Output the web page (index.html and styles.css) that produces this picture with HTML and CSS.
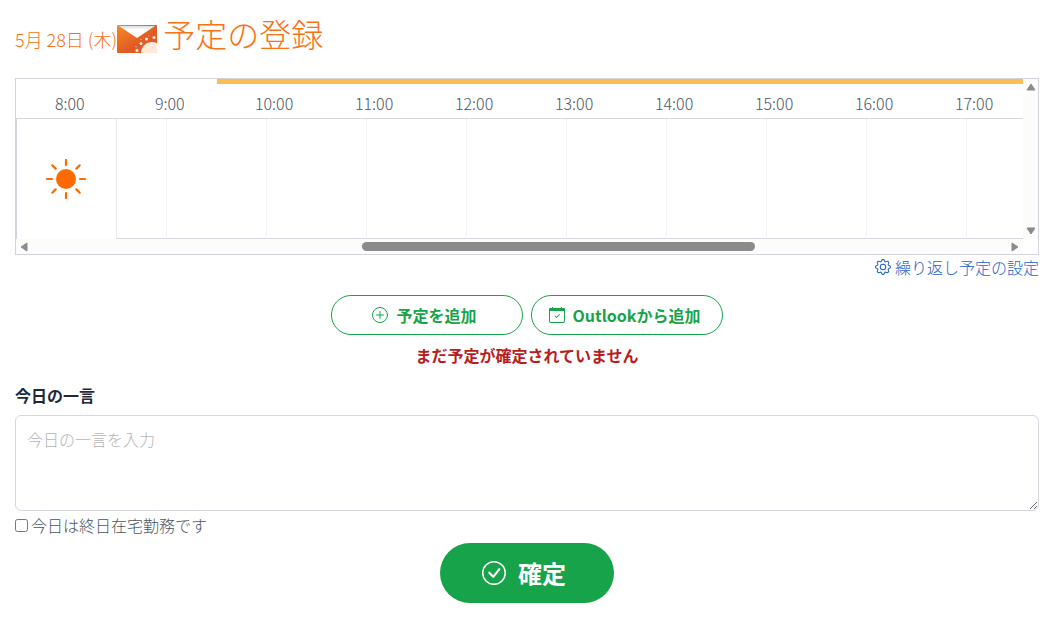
FILE: index.html
```
<!DOCTYPE html>
<html lang="ja">
<head>
    <meta charset="UTF-8">
    <meta name="viewport" content="width=device-width, initial-scale=1.0">
    <title>予定の登録</title>
    <link rel="stylesheet" href="styles.css">
</head>
<body>
    <header class="page-header">
        <span class="date">5月 28日 (木)</span>
        <svg class="mail-icon" viewBox="0 0 40 28" aria-hidden="true">
            <defs>
                <linearGradient id="mail" x1="0" y1="0" x2="1" y2="1">
                    <stop offset="0" stop-color="#f98a25"/>
                    <stop offset=".6" stop-color="#df5a24"/>
                </linearGradient>
                <linearGradient id="flap" x1="0" y1="0" x2="0" y2="1">
                    <stop offset="0" stop-color="#dcdcdc"/>
                    <stop offset=".3" stop-color="#fff"/>
                </linearGradient>
                <clipPath id="mail-clip"><rect width="40" height="28" rx="1"/></clipPath>
            </defs>
            <g clip-path="url(#mail-clip)">
                <rect width="40" height="28" fill="url(#mail)"/>
                <path d="M2 1h36L20 13z" fill="url(#flap)"/>
                <g fill="#ffe9d8">
                    <circle cx="35" cy="28" r="11"/>
                    <circle cx="20" cy="25.500" r="1.500"/>
                    <circle cx="19" cy="21.500" r=".6"/>
                    <circle cx="24" cy="18.500" r="1.500"/>
                    <circle cx="24" cy="14.500" r=".5"/>
                    <circle cx="29.500" cy="14" r="1.500"/>
                    <circle cx="32" cy="11" r=".5"/>
                    <circle cx="37" cy="12.500" r="1.500"/>
                </g>
            </g>
        </svg>
        <h1 class="title">予定の登録</h1>
    </header>

    <main>
        <div class="timeline">
            <div class="timeline-view">
                <div class="hours">
                    <span class="hour">8:00</span>
                    <span class="hour">9:00</span>
                    <span class="hour">10:00</span>
                    <span class="hour">11:00</span>
                    <span class="hour">12:00</span>
                    <span class="hour">13:00</span>
                    <span class="hour">14:00</span>
                    <span class="hour">15:00</span>
                    <span class="hour">16:00</span>
                    <span class="hour">17:00</span>
                    <div class="core-time"></div>
                </div>
                <div class="slots">
                    <div class="slot-head">
                        <svg width="40" height="40" viewBox="0 0 40 40" aria-hidden="true">
                            <circle cx="20" cy="20" r="10" fill="#ff6a00"/>
                            <path d="M20 1v5M20 34v5M1 20h5M34 20h5M6.300 6.300l3.300 3.300M30.400 30.400l3.300 3.300M6.300 33.700l3.300-3.300M30.400 9.600l3.300-3.300" stroke="#ff6a00" stroke-width="2.200" stroke-linecap="round"/>
                        </svg>
                    </div>
                    <div class="slot slot-half"></div>
                    <div class="slot"></div>
                    <div class="slot"></div>
                    <div class="slot"></div>
                    <div class="slot"></div>
                    <div class="slot"></div>
                    <div class="slot"></div>
                    <div class="slot"></div>
                    <div class="slot"></div>
                    <div class="slot slot-last"></div>
                </div>
            </div>
            <div class="scroll-y">
                <svg width="10" height="8" viewBox="0 0 10 8"><path d="M5 1 9 7H1z"/></svg>
                <svg width="10" height="8" viewBox="0 0 10 8"><path d="M5 7 9 1H1z"/></svg>
            </div>
            <div class="scroll-x">
                <svg width="8" height="10" viewBox="0 0 8 10"><path d="M1 5 7 1v8z"/></svg>
                <div class="track"><div class="thumb"></div></div>
                <svg width="8" height="10" viewBox="0 0 8 10"><path d="M7 5 1 1v8z"/></svg>
            </div>
        </div>

        <div class="repeat">
            <a class="repeat-link" href="#">
                <svg width="16" height="16" viewBox="0 0 16 16" fill="currentColor" aria-hidden="true">
                    <path d="M8 4.754a3.246 3.246 0 1 0 0 6.492 3.246 3.246 0 0 0 0-6.492zM5.754 8a2.246 2.246 0 1 1 4.492 0 2.246 2.246 0 0 1-4.492 0z"/>
                    <path d="M9.796 1.343c-.527-1.790-3.065-1.790-3.592 0l-.094.319a.873.873 0 0 1-1.255.520l-.292-.160c-1.640-.892-3.433.902-2.540 2.541l.159.292a.873.873 0 0 1-.520 1.255l-.319.094c-1.790.527-1.790 3.065 0 3.592l.319.094a.873.873 0 0 1 .520 1.255l-.160.292c-.892 1.640.901 3.434 2.541 2.540l.292-.159a.873.873 0 0 1 1.255.520l.094.319c.527 1.790 3.065 1.790 3.592 0l.094-.319a.873.873 0 0 1 1.255-.520l.292.160c1.640.893 3.434-.902 2.540-2.541l-.159-.292a.873.873 0 0 1 .520-1.255l.319-.094c1.790-.527 1.790-3.065 0-3.592l-.319-.094a.873.873 0 0 1-.520-1.255l.160-.292c.893-1.640-.902-3.433-2.541-2.540l-.292.159a.873.873 0 0 1-1.255-.520l-.094-.319zm-2.633.283c.246-.835 1.428-.835 1.674 0l.094.319a1.873 1.873 0 0 0 2.693 1.115l.291-.160c.764-.415 1.600.420 1.184 1.185l-.159.292a1.873 1.873 0 0 0 1.116 2.692l.318.094c.835.246.835 1.428 0 1.674l-.319.094a1.873 1.873 0 0 0-1.115 2.693l.160.291c.415.764-.420 1.600-1.185 1.184l-.291-.159a1.873 1.873 0 0 0-2.693 1.116l-.094.318c-.246.835-1.428.835-1.674 0l-.094-.319a1.873 1.873 0 0 0-2.692-1.115l-.292.160c-.764.415-1.600-.420-1.184-1.185l.159-.291A1.873 1.873 0 0 0 1.945 8.930l-.319-.094c-.835-.246-.835-1.428 0-1.674l.319-.094A1.873 1.873 0 0 0 3.060 4.377l-.160-.292c-.415-.764.420-1.600 1.185-1.184l.292.159a1.873 1.873 0 0 0 2.692-1.115l.094-.319z"/>
                </svg>
                繰り返し予定の設定
            </a>
        </div>

        <div class="actions">
            <button type="button" class="btn-outline">
                <svg width="16" height="16" viewBox="0 0 16 16" fill="none" stroke="currentColor" stroke-linecap="round" aria-hidden="true">
                    <circle cx="8" cy="8" r="7.500"/>
                    <path d="M8 4.500v7M4.500 8h7"/>
                </svg>
                予定を追加
            </button>
            <button type="button" class="btn-outline">
                <svg width="16" height="16" viewBox="0 0 16 16" fill="currentColor" aria-hidden="true">
                    <path d="M10.854 7.146a.5.5 0 0 1 0 .708l-3 3a.5.5 0 0 1-.708 0l-1.500-1.500a.5.5 0 1 1 .708-.708L7.500 9.793l2.646-2.647a.5.5 0 0 1 .708 0z"/>
                    <path d="M3 0h1v1h8V0h1v1h2a1 1 0 0 1 1 1v12a2 2 0 0 1-2 2H2a2 2 0 0 1-2-2V2a1 1 0 0 1 1-1h2zM1 4v10a1 1 0 0 0 1 1h12a1 1 0 0 0 1-1V4H1z"/>
                </svg>
                Outlookから追加
            </button>
        </div>

        <p class="warning">まだ予定が確定されていません</p>

        <form class="comment-form">
            <label class="comment-label" for="comment">今日の一言</label>
            <textarea class="comment" id="comment" placeholder="今日の一言を入力"></textarea>
            <div class="remote">
                <input type="checkbox" class="remote-check" id="remote">
                <label for="remote">今日は終日在宅勤務です</label>
            </div>
            <button type="button" class="btn-submit">
                <svg width="24" height="24" viewBox="0 0 16 16" fill="currentColor" aria-hidden="true">
                    <path d="M8 15A7 7 0 1 1 8 1a7 7 0 0 1 0 14zm0 1A8 8 0 1 0 8 0a8 8 0 0 0 0 16z"/>
                    <path d="M10.970 4.970a.235.235 0 0 0-.020.022L7.477 9.417 5.384 7.323a.75.75 0 0 0-1.060 1.060L6.970 11.030a.75.75 0 0 0 1.079-.020l3.992-4.990a.75.75 0 0 0-1.071-1.050z"/>
                </svg>
                確定
            </button>
        </form>
    </main>
</body>
</html>
```
FILE: styles.css
```
* {
    box-sizing: border-box;
}

body {
    margin: 0;
    padding: 12px 19px 24px 15px;
    font-family: 'Noto Sans CJK JP', sans-serif;
    font-size: 16px;
    font-weight: 300;
    line-height: 24px;
    color: #4b5563;
    background: #fff;
}

button,
textarea {
    font: inherit;
}

.page-header {
    display: flex;
    align-items: baseline;
    height: 66px;
    color: #f97316;
}

.date {
    font-size: 18px;
}

.mail-icon {
    width: 40px;
    height: 28px;
    align-self: flex-start;
    margin: 13px 6px 0 0;
}

.title {
    margin: 0;
    font-size: 32px;
    font-weight: 300;
    line-height: 42px;
}

/* timeline */
.timeline {
    display: grid;
    grid-template-columns: minmax(0, 1fr) 15px;
    border: 1px solid #d1d5db;
}

.timeline-view {
    overflow: hidden;
}

.hours {
    position: relative;
    display: flex;
    height: 40px;
    padding-top: 12px;
    border-bottom: 1px solid #d6d8e0;
}

.hour {
    flex: 0 0 100px;
    padding-left: 39px;
}

.core-time {
    position: absolute;
    top: 0;
    left: 201px;
    right: 0;
    height: 5px;
    background: #ffbc52;
}

.slots {
    display: flex;
    height: 120px;
}

.slot-head {
    flex: 0 0 101px;
    display: flex;
    align-items: center;
    justify-content: center;
    padding-right: 1px;
    border-left: 1px solid #d1d5db;
    border-right: 1px solid #e5e7eb;
}

.slot {
    flex: 0 0 100px;
    border-right: 1px dotted #e5e7eb;
    border-bottom: 1px solid #d6d8e0;
}

.slot-half {
    flex-basis: 50px;
}

.slot-last {
    flex: 1 0 0;
    border-right: 0;
}

.scroll-x,
.scroll-y {
    display: flex;
    align-items: center;
    justify-content: space-between;
    background: #fcfcfc;
    fill: #8b8b8b;
    stroke: #8b8b8b;
    stroke-linejoin: round;
}

.scroll-y {
    flex-direction: column;
    padding: 4px 0;
}

.scroll-x {
    height: 15px;
    padding: 0 4px;
}

.track {
    flex: 1;
}

.thumb {
    width: 40%;
    height: 9px;
    margin-left: 34%;
    border-radius: 5px;
    background: #8b8b8b;
}

.repeat {
    display: flex;
    justify-content: flex-end;
}

.repeat-link {
    display: flex;
    align-items: center;
    gap: 4px;
    color: #1d5fc9;
    text-decoration: none;
}

.actions {
    display: flex;
    justify-content: center;
    gap: 8px;
    margin-top: 16px;
}

.btn-outline {
    display: flex;
    align-items: center;
    justify-content: center;
    gap: 8px;
    width: 192px;
    height: 40px;
    padding: 0 5px 0 0;
    border: 1px solid #16a34a;
    border-radius: 20px;
    background: #fff;
    color: #16a34a;
    font-weight: 700;
}

.warning {
    margin: 8px 0 16px;
    color: #b91c1c;
    font-weight: 700;
    text-align: center;
}

/* comment */
.comment-form {
    display: flex;
    flex-direction: column;
}

.comment-label {
    color: #1f2937;
    font-weight: 700;
}

.comment {
    height: 96px;
    margin: 8px 0 2px;
    padding: 11px;
    border: 1px solid #d6d8e0;
    border-radius: 6px;
    color: #4b5563;
    resize: vertical;
}

.comment::placeholder {
    color: #b5b5b5;
}

.remote {
    display: flex;
    align-items: center;
    gap: 3px;
}

.remote-check {
    width: 13px;
    height: 13px;
    margin: 0;
}

.btn-submit {
    display: flex;
    align-items: center;
    align-self: center;
    justify-content: center;
    gap: 12px;
    width: 174px;
    height: 60px;
    margin-top: 6px;
    padding: 0 6px 0 0;
    border: 0;
    border-radius: 30px;
    background: #16a34a;
    color: #fff;
    font-size: 24px;
    font-weight: 700;
}
```
